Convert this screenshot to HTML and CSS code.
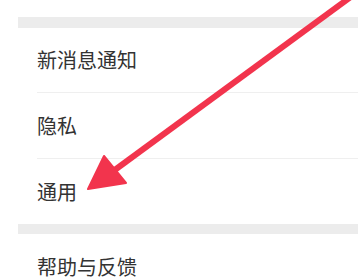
FILE: index.html
```html
<!DOCTYPE html>
<html lang="zh-CN">
<head>
<meta charset="utf-8">
<link rel="stylesheet" href="styles.css">
</head>
<body>
<div class="screen">
  <div class="gap gap-top"></div>
  <div class="group">
    <div class="item"><span class="label">新消息通知</span></div>
    <div class="item"><span class="label">隐私</span></div>
    <div class="item last"><span class="label">通用</span></div>
  </div>
  <div class="gap"></div>
  <div class="group">
    <div class="item last"><span class="label">帮助与反馈</span></div>
  </div>
</div>
<svg class="arrow" width="358" height="280" viewBox="0 0 358 280">
  <line x1="352" y1="-4" x2="112" y2="172" stroke="#f2344d" stroke-width="6"/>
  <polygon points="88,189 104,156 126,183" fill="#f2344d" stroke="#f2344d" stroke-width="2" stroke-linejoin="round"/>
</svg>
</body>
</html>
```

FILE: styles.css
```css
html, body {
  margin: 0;
  padding: 0;
  background: #ffffff;
}
body {
  width: 358px;
  height: 280px;
  overflow: hidden;
  position: relative;
  font-family: "Noto Sans CJK SC", "Noto Sans", sans-serif;
}
.screen {
  margin-left: 18px;
  padding-top: 17px;
}
.gap {
  height: 10px;
  background: #ececec;
}
.gap-top {
  height: 11px;
}
.group {
  background: #ffffff;
  padding-left: 19px;
}
.item {
  height: 65px;
  display: flex;
  align-items: center;
  border-bottom: 1px solid #efefef;
  box-sizing: border-box;
  height: 66px;
}
.item:first-child {
  height: 65px;
}
.item.last {
  border-bottom: none;
  height: 65px;
}
.label {
  font-size: 20px;
  line-height: 20px;
  color: #333333;
}
.arrow {
  position: absolute;
  left: 0;
  top: 0;
}
```
